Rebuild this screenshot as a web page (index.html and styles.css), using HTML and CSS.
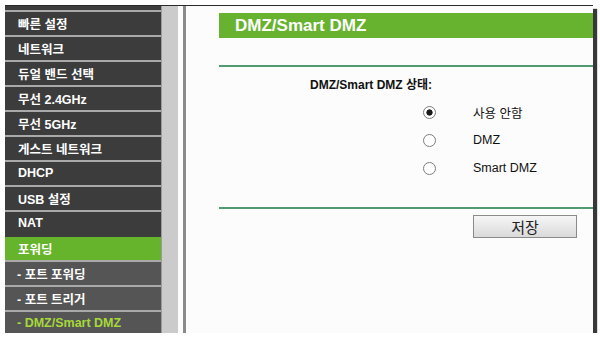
FILE: index.html
```html
<!DOCTYPE html>
<html>
<head>
  <meta charset="UTF-8">
  <title>DMZ/Smart DMZ</title>
  <link rel="stylesheet" href="styles.css">
</head>
<body>
  <div class="frame">
    <!-- Left menu -->
    <nav class="menu">
      <div class="menu-top"></div>
      <a class="menu-item">빠른 설정</a>
      <a class="menu-item">네트워크</a>
      <a class="menu-item">듀얼 밴드 선택</a>
      <a class="menu-item">무선 2.4GHz</a>
      <a class="menu-item">무선 5GHz</a>
      <a class="menu-item">게스트 네트워크</a>
      <a class="menu-item">DHCP</a>
      <a class="menu-item">USB 설정</a>
      <a class="menu-item">NAT</a>
      <a class="menu-item active">포워딩</a>
      <a class="menu-item sub">- 포트 포워딩</a>
      <a class="menu-item sub">- 포트 트리거</a>
      <a class="menu-item sub current">- DMZ/Smart DMZ</a>
    </nav>
    <div class="scroll-strip"></div>
    <div class="divider"></div>
    <!-- Main content -->
    <main class="content">
      <div class="title-bar">DMZ/Smart DMZ</div>
      <hr class="rule first">
      <div class="field-label">DMZ/Smart DMZ 상태:</div>
      <div class="options">
        <label class="option"><input type="radio" name="dmz" checked><span>사용 안함</span></label>
        <label class="option"><input type="radio" name="dmz"><span>DMZ</span></label>
        <label class="option"><input type="radio" name="dmz"><span>Smart DMZ</span></label>
      </div>
      <hr class="rule second">
      <button class="save-button">저장</button>
    </main>
  </div>
</body>
</html>
```

FILE: styles.css
```css
body {
  margin: 0;
  background-color: #fff;
  font-family: "Liberation Sans", "Noto Sans CJK KR", sans-serif;
}
/* Screenshot frame */
.frame {
  display: flex;
  width: 588px;
  height: 327px;
  margin: 5px 0 0 5px;
  border-top: 1px solid #2a2a2a;
  box-shadow: 4px 4px 1px #383838;
  background-color: #fcfcfc;
  overflow: hidden;
}
/* Left menu */
.menu {
  display: flex;
  flex-direction: column;
  width: 156px;
  background-color: #3c3c3c;
}
.menu-top {
  height: 4px;
  flex: none;
}
.menu-item {
  display: flex;
  align-items: center;
  flex: none;
  height: 22px;
  padding: 0 0 1px 13px;
  border-top: 2px solid #a9a9a9;
  color: #fff;
  font-size: 12.5px;
  font-weight: bold;
  text-decoration: none;
}
.menu-item.active {
  background-color: #66b42c;
  border-top-color: #3c3c3c;
}
.menu-item.sub {
  background-color: #555;
  padding-left: 12px;
}
.menu-item.current {
  color: #a6d93a;
}
.scroll-strip {
  width: 16px;
  background-color: #cbcbcb;
  border-left: 1px solid #9a9a9a;
}
.divider {
  width: 3px;
  margin-left: 5px;
  background-color: #8a8a8a;
}
/* Content */
.content {
  flex: 1;
  padding-top: 7px;
  margin-left: 33px;
  font-size: 12px;
  color: #111;
}
.title-bar {
  height: 25px;
  line-height: 25px;
  padding-left: 16px;
  background-color: #67b32f;
  color: #fff;
  font-size: 17px;
  font-weight: bold;
}
.rule {
  margin: 0;
  border: none;
  height: 2px;
  background-color: #4f9a70;
}
.rule.first {
  margin-top: 27px;
}
.rule.second {
  margin-top: 25px;
}
.field-label {
  margin: 10px 0 0 91px;
  line-height: 16px;
  font-weight: bold;
}
.options {
  margin-top: 5px;
  font-size: 12.5px;
}
.option {
  display: flex;
  align-items: center;
  height: 28px;
  padding-left: 204px;
}
.option input {
  appearance: none;
  -webkit-appearance: none;
  width: 13px;
  height: 13px;
  margin: 0 37px 0 0;
  border: 1px solid #7c7c7c;
  border-radius: 50%;
  background-color: #fff;
  box-sizing: border-box;
}
.option input:checked {
  background: radial-gradient(circle, #1a1a1a 0 2.8px, #fff 3.4px);
}
.save-button {
  display: block;
  width: 104px;
  height: 23px;
  margin: 6px 0 0 254px;
  padding: 0;
  border: 1px solid #8a8a8a;
  background: linear-gradient(#f6f6f6, #dadada);
  color: #222;
  font-family: "Noto Sans CJK KR", sans-serif;
  font-size: 15px;
  line-height: 20px;
}
```
